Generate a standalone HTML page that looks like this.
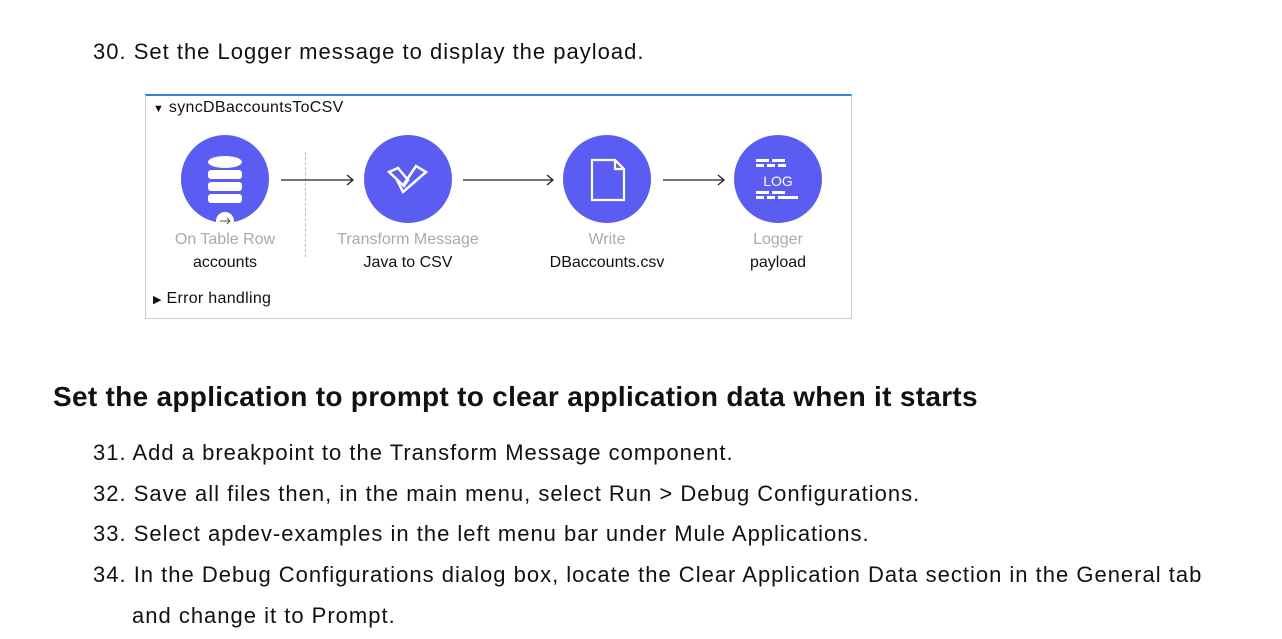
<!DOCTYPE html>
<html><head><style>
body{margin:0;width:1282px;height:639px;background:#fff;font-family:"Liberation Sans",Arial,sans-serif;color:#111;position:relative;overflow:hidden}
.t{position:absolute;white-space:nowrap;font-size:22px;letter-spacing:1px}
.h{position:absolute;left:53px;top:381px;font-size:28px;letter-spacing:0.3px;font-weight:bold;white-space:nowrap}
.box{position:absolute;left:145px;top:94px;width:705px;height:222px;border:1px solid #ccc;border-top:2px solid #2e86de}
.c{position:absolute;width:88px;height:88px;border-radius:50%;background:#5b5cf2}
.l{position:absolute;font-size:16px;text-align:center;width:200px;white-space:nowrap}
.g{color:#aaa}
</style></head><body>
<div class="t" style="left:93px;top:39px">30. Set the Logger message to display the payload.</div>
<div class="box"></div>
<div style="position:absolute;left:153px;top:99px;font-size:16px;letter-spacing:0.3px"><span style="font-size:11px">▼</span> syncDBaccountsToCSV</div>
<div style="position:absolute;left:153px;top:290px;font-size:16px;letter-spacing:0.3px"><span style="font-size:11px">▶</span> Error handling</div>
<div style="position:absolute;left:305px;top:152px;height:105px;border-left:1px dashed #bbb"></div>
<svg style="position:absolute;left:0;top:0" width="1282" height="639">
<g stroke="#222" stroke-width="1.3" fill="none">
<path d="M281 180H353M347 175L353 180L347 185"/>
<path d="M463 180H553M547 175L553 180L547 185"/>
<path d="M663 180H724M718 175L724 180L718 185"/>
</g>
</svg>
<div class="c" style="left:181px;top:135px"></div>
<div class="c" style="left:364px;top:135px"></div>
<div class="c" style="left:563px;top:135px"></div>
<div class="c" style="left:734px;top:135px"></div>
<svg style="position:absolute;left:0;top:0" width="1282" height="639">
<g fill="#fff">
<ellipse cx="225" cy="162" rx="17" ry="6"/>
<rect x="208" y="170" width="34" height="9" rx="3"/>
<rect x="208" y="182" width="34" height="9" rx="3"/>
<rect x="208" y="194" width="34" height="9" rx="3"/>
</g>
<circle cx="225" cy="221" r="9" fill="#fff"/>
<path d="M220 221H230M227 218L230 221L227 224" stroke="#555" fill="none"/>
<path d="M389 172L398 168L408 180L404 186ZM396 178L403 192L426 172L416 166L404 184" stroke="#fff" stroke-width="2.5" fill="none"/>
<path d="M592 160H615L624 169V200H592Z M615 160V169H624" stroke="#fff" stroke-width="2.2" fill="none"/>
<g fill="#fff"><rect x="756" y="159" width="13" height="3"/><rect x="772" y="159" width="13" height="3"/><rect x="756" y="164" width="8" height="3"/><rect x="767" y="164" width="8" height="3"/><rect x="778" y="164" width="8" height="3"/>
<rect x="756" y="191" width="13" height="3"/><rect x="772" y="191" width="13" height="3"/><rect x="756" y="196" width="8" height="3"/><rect x="767" y="196" width="8" height="3"/><rect x="778" y="196" width="20" height="3"/></g>
<text x="778" y="186" font-family="Liberation Sans" font-size="14" fill="#fff" text-anchor="middle">LOG</text>
</svg>
<div class="l g" style="left:125px;top:231px">On Table Row</div>
<div class="l" style="left:125px;top:254px">accounts</div>
<div class="l g" style="left:308px;top:231px">Transform Message</div>
<div class="l" style="left:308px;top:254px">Java to CSV</div>
<div class="l g" style="left:507px;top:231px">Write</div>
<div class="l" style="left:507px;top:254px">DBaccounts.csv</div>
<div class="l g" style="left:678px;top:231px">Logger</div>
<div class="l" style="left:678px;top:254px">payload</div>
<div class="h">Set the application to prompt to clear application data when it starts</div>
<div class="t" style="left:93px;top:440px">31. Add a breakpoint to the Transform Message component.</div>
<div class="t" style="left:93px;top:481px">32. Save all files then, in the main menu, select Run &gt; Debug Configurations.</div>
<div class="t" style="left:93px;top:521px">33. Select apdev-examples in the left menu bar under Mule Applications.</div>
<div class="t" style="left:93px;top:562px">34. In the Debug Configurations dialog box, locate the Clear Application Data section in the General tab</div>
<div class="t" style="left:132px;top:603px">and change it to Prompt.</div>
</body></html>
